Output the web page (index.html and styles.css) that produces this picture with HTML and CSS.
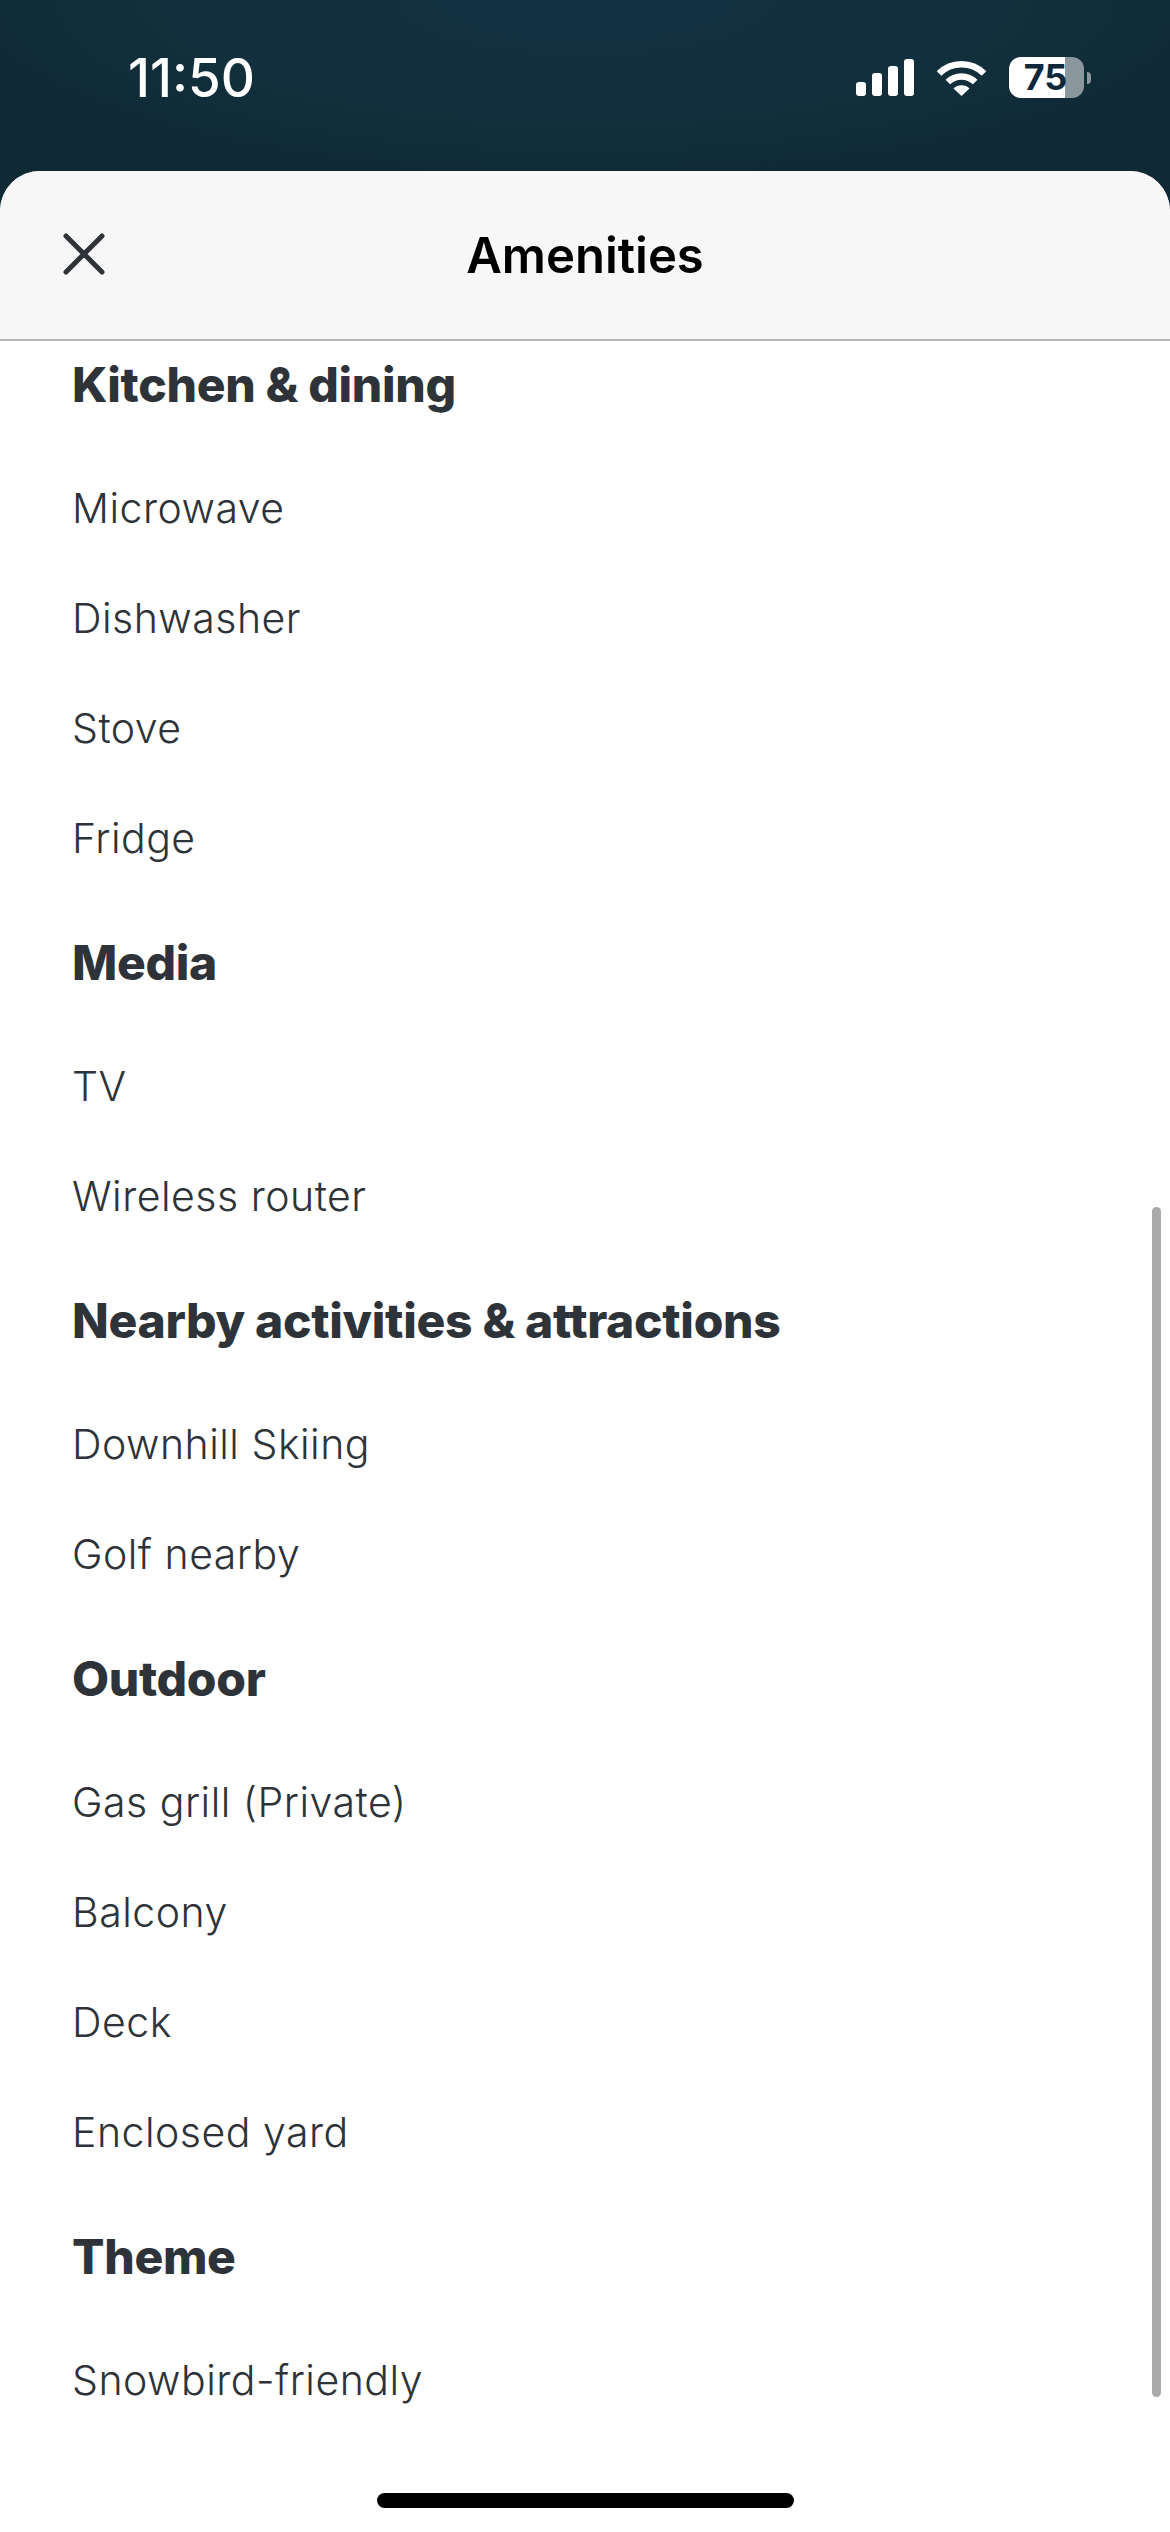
FILE: index.html
```html
<!DOCTYPE html>
<html lang="en">
<head>
  <meta charset="UTF-8" />
  <meta name="viewport" content="width=device-width, initial-scale=1.0" />
  <title>Amenities</title>
  <link rel="stylesheet" href="styles.css">
</head>
<body>
  <div class="status">
    <span class="time">11:50</span>
    <div class="status-icons">
      <div class="signal">
        <i class="bar1"></i><i class="bar2"></i><i class="bar3"></i><i class="bar4"></i>
      </div>
      <svg class="wifi" width="51" height="37" viewBox="0 0 51 37">
        <path d="M3 14.5 A32 32 0 0 1 48 14.5" fill="none" stroke="#fff" stroke-width="6.5"/>
        <path d="M11.8 23 A19.5 19.5 0 0 1 39.2 23" fill="none" stroke="#fff" stroke-width="6.5"/>
        <path d="M17.5 29.5 A11.5 11.5 0 0 1 33.5 29.5 L25.5 37 Z" fill="#fff"/>
      </svg>
      <div class="battery"><span>75</span></div>
      <div class="battery-nub"></div>
    </div>
  </div>

  <div class="sheet">
    <header class="sheet-head">
      <button class="close" aria-label="Close">
        <svg width="42" height="42" viewBox="0 0 42 42">
          <path d="M3 3 L39 39 M39 3 L3 39" fill="none" stroke="#2d3338" stroke-width="5" stroke-linecap="round"/>
        </svg>
      </button>
      <h1>Amenities</h1>
    </header>

    <div class="list">
      <h2>Kitchen &amp; dining</h2>
      <p>Microwave</p>
      <p>Dishwasher</p>
      <p>Stove</p>
      <p>Fridge</p>

      <h2>Media</h2>
      <p>TV</p>
      <p>Wireless router</p>

      <h2>Nearby activities &amp; attractions</h2>
      <p>Downhill Skiing</p>
      <p>Golf nearby</p>

      <h2>Outdoor</h2>
      <p>Gas grill (Private)</p>
      <p>Balcony</p>
      <p>Deck</p>
      <p>Enclosed yard</p>

      <h2>Theme</h2>
      <p>Snowbird-friendly</p>
    </div>

    <div class="scrollbar"></div>
  </div>

  <div class="home-indicator"></div>
</body>
</html>
```

FILE: styles.css
```css
html, body {
  margin: 0;
  height: 100%;
}
body {
  width: 1170px;
  height: 2532px;
  overflow: hidden;
  display: flex;
  flex-direction: column;
  position: relative;
  font-family: Inter, "Noto Sans", sans-serif;
  background: radial-gradient(ellipse 700px 200px at 50% 0, #123143 0%, #12303d 55%, #0f2935 100%);
}

/* status bar */
.status {
  height: 171px;
  flex: none;
  display: flex;
  justify-content: space-between;
  align-items: flex-start;
  padding: 49px 79px 0 128px;
  box-sizing: border-box;
}
.time {
  color: #fff;
  font-size: 53px;
  font-weight: 500;
  line-height: 58px;
}
.status-icons {
  display: flex;
  align-items: center;
  height: 41px;
  margin-top: 8px;
}
.signal {
  display: flex;
  align-items: flex-end;
  gap: 6px;
  height: 37px;
  margin-right: 22px;
}
.signal i {
  width: 10px;
  background: #fff;
  border-radius: 3px;
}
.bar1 { height: 14px; }
.bar2 { height: 23px; }
.bar3 { height: 30px; }
.bar4 { height: 37px; }
.wifi {
  margin-right: 22px;
}
.battery {
  width: 75px;
  height: 41px;
  border-radius: 12px;
  background: linear-gradient(90deg, #fff 75%, #8a979d 75%);
  display: flex;
  align-items: center;
  justify-content: center;
  color: #10293a;
  font-size: 36px;
  font-weight: 700;
  line-height: 41px;
}
.battery span {
  margin-right: 2px;
}
.battery-nub {
  width: 4px;
  height: 12px;
  margin-left: 3px;
  background: #8a979d;
  border-radius: 0 4px 4px 0;
}

/* sheet */
.sheet {
  flex: 1;
  position: relative;
  background: white;
  border-radius: 40px 40px 0 0;
  overflow: hidden;
}
.sheet-head {
  height: 168px;
  display: flex;
  align-items: center;
  justify-content: center;
  position: relative;
  background: #f7f7f7;
  border-bottom: 2px solid #b5b5b5;
}
.sheet-head h1 {
  margin: 0;
  font-size: 49px;
  font-weight: 600;
  color: #000;
}
.close {
  position: absolute;
  left: 63px;
  top: 62px;
  width: 42px;
  height: 42px;
  padding: 0;
  border: none;
  background: none;
  display: flex;
}

/* list */
.list {
  padding: 0 72px;
  color: #2d3338;
}
.list h2 {
  margin: 0;
  padding: 27px 0 25px;
  font-size: 48px;
  line-height: 86px;
  font-weight: 800;
  letter-spacing: -0.3px;
}
.list h2:first-child {
  padding-top: 1px;
}
.list p {
  margin: 0;
  font-size: 41px;
  font-weight: 350;
  letter-spacing: 0.5px;
  line-height: 110px;
}
.scrollbar {
  position: absolute;
  left: 1152px;
  top: 1036px;
  width: 9px;
  height: 1190px;
  border-radius: 5px;
  background: #aaa;
}
.home-indicator {
  position: absolute;
  left: 377px;
  top: 2493px;
  width: 417px;
  height: 15px;
  border-radius: 8px;
  background: #000;
}
```
